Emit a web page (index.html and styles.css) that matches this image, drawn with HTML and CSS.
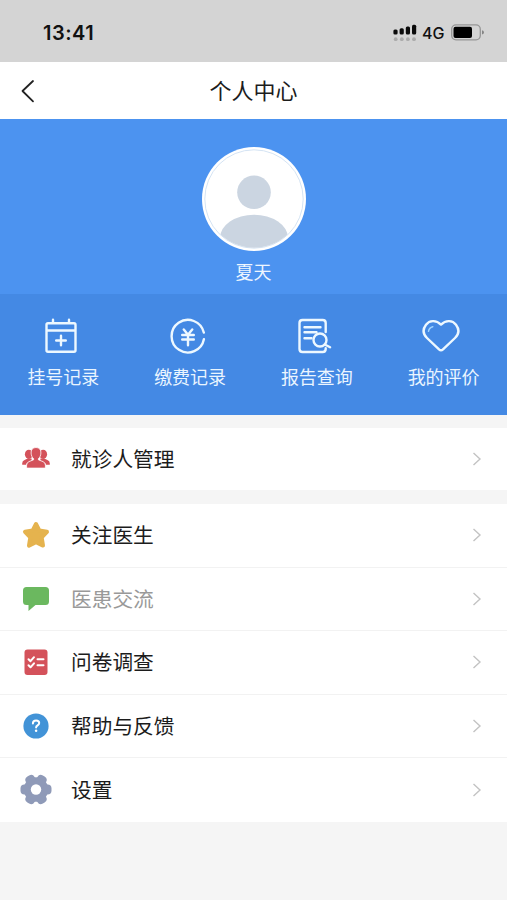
FILE: index.html
```html
<!DOCTYPE html>
<html lang="zh-CN">
<head>
<meta charset="utf-8">
<title>个人中心</title>
<link rel="stylesheet" href="styles.css">
</head>
<body>
<div class="status">
  <span class="time">13:41</span>
  <div class="indicators">
    <svg class="signal" width="24" height="18" viewBox="0 0 24 18">
      <g fill="#0a0a0a"><rect x="-.6" y="5.600" width="4.200" height="5" rx="1.500"/><rect x="5.600" y="4.200" width="4.200" height="6.400" rx="1.500"/><rect x="11.800" y="2.600" width="4.200" height="8" rx="1.500"/><rect x="18" y=".8" width="4.200" height="9.800" rx="1.500"/></g>
      <g fill="#aaa"><circle cx="1.700" cy="15.200" r="1.900"/><circle cx="7.800" cy="15.200" r="1.900"/><circle cx="13.900" cy="15.200" r="1.900"/><circle cx="20" cy="15.200" r="1.900"/></g>
    </svg>
    <span class="network">4G</span>
    <svg class="battery" width="33" height="17" viewBox="0 0 33 17">
      <rect x=".7" y=".9" width="28.600" height="15" rx="4.300" fill="none" stroke="#969696" stroke-width="1.300"/>
      <rect x="2.500" y="2.700" width="18.500" height="11.400" rx="2" fill="#000"/>
      <path d="M31 6.300q2 .6 2 2.100t-2 2.100z" fill="#858585"/>
    </svg>
  </div>
</div>
<header class="nav">
  <svg class="back" width="16" height="24" viewBox="0 0 16 24"><path d="M13 2 2.500 12 13 22.300" fill="none" stroke="#222" stroke-width="1.800" stroke-linecap="round" stroke-linejoin="round"/></svg>
  <h1>个人中心</h1>
</header>
<section class="profile">
  <svg class="avatar" width="104" height="104" viewBox="0 0 104 104">
    <defs><clipPath id="face"><circle cx="52" cy="52" r="48.700"/></clipPath></defs>
    <circle cx="52" cy="52" r="52" fill="#fff"/>
    <circle cx="52" cy="52" r="49.200" fill="none" stroke="#cfe0f2" stroke-width=".9"/>
    <g fill="#cbd5e1" clip-path="url(#face)"><circle cx="52" cy="45.300" r="16.800"/><ellipse cx="52" cy="91" rx="34" ry="23.300"/></g>
  </svg>
  <div class="name">夏天</div>
</section>
<nav class="tabs">
  <a class="tab">
    <svg width="40" height="40" viewBox="0 0 40 40"><path d="M7 6.300h26q1.500 0 1.500 1.500v25.400q0 1.500-1.500 1.500H7q-1.500 0-1.500-1.500V7.800q0-1.500 1.500-1.500zM5.500 13.500h29M12 2.700v3.600M28 2.700v3.600M20 18.700v9.600M15.200 23.500h9.600"/></svg>
    <span>挂号记录</span>
  </a>
  <a class="tab">
    <svg width="40" height="40" viewBox="0 0 40 40"><path d="M35.800 15.600A16.300 16.300 0 1 0 35.900 22.300M15.800 12.500 20 17.700l4.200-5.200M14.200 18h11.600M14.200 22.500h11.600M20 17.700v10.500"/></svg>
    <span>缴费记录</span>
  </a>
  <a class="tab">
    <svg width="40" height="40" viewBox="0 0 40 40"><path d="M31.700 15V6q0-3-3-3H8.500q-3 0-3 3v26q0 3 3 3h20.200q3 0 3-3v-.7M10.500 10.200h16M10.500 15.300h12M10.500 21.200h7"/><circle cx="26" cy="23" r="6.500"/><path d="m30.700 27.500 5.400 2.800"/></svg>
    <span>报告查询</span>
  </a>
  <a class="tab">
    <svg width="40" height="40" viewBox="0 0 40 40"><path d="M20 7.600C15 2.500 8.300 3.300 5 7.700 1.400 12.500 2.200 17.300 6 21l12 11.300q2 1.900 4 0L34 21c3.800-3.700 4.600-8.500 1-13.300C31.700 3.300 25 2.500 20 7.600z"/><path class="shine" d="M7.500 14.300q.6-3.700 4.300-4.600"/></svg>
    <span>我的评价</span>
  </a>
</nav>
<main>
  <section class="group">
    <a class="row single">
      <svg class="icon" width="32" height="32" viewBox="0 0 32 32" fill="#d4525b">
        <ellipse cx="8.800" cy="11.300" rx="3.900" ry="4.600"/><ellipse cx="23.200" cy="11.300" rx="3.900" ry="4.600"/>
        <path d="M2.200 21.800v-1.600q0-2.400 2.400-3.300l3-1.300h4v2l-3.800 1.800q-1.500 1-1.700 2.400zM29.800 21.800v-1.600q0-2.400-2.400-3.300l-3-1.300h-4v2l3.800 1.800q1.500 1 1.700 2.400z"/>
        <path stroke="#fff" stroke-width=".8" d="M16 4.500c-3.500 0-5.100 2.400-4.900 5.500.1 2.600 1.100 4.600 2.500 5.600v1.200l-4.600 1.800q-2.400 1-2.400 3.500v3h18.800v-3q0-2.500-2.400-3.500l-4.600-1.800v-1.200c1.400-1 2.400-3 2.500-5.600.2-3.100-1.400-5.500-4.900-5.500z"/>
      </svg>
      <span class="label">就诊人管理</span>
      <svg class="chevron" width="10" height="16" viewBox="0 0 10 16"><path d="m1.500 2 6.500 6-6.500 6"/></svg>
    </a>
  </section>
  <section class="group">
    <a class="row">
      <svg class="icon" width="32" height="32" viewBox="0 0 32 32"><path d="m16 5 3.300 6.500 7.700 1.300-5.300 5.600 1.300 8.200-7-3.300-7 3.300 1.300-8.200L5 12.800l7.700-1.300z" fill="#e5b34e" stroke="#e5b34e" stroke-width="4" stroke-linejoin="round"/></svg>
      <span class="label">关注医生</span>
      <svg class="chevron" width="10" height="16" viewBox="0 0 10 16"><path d="m1.500 2 6.500 6-6.500 6"/></svg>
    </a>
    <a class="row">
      <svg class="icon" width="32" height="32" viewBox="0 0 32 32"><path d="M6.500 4h19q3.500 0 3.500 3.500v11q0 3.500-3.500 3.500H15.500L8.500 28v-6h-2Q3 22 3 18.500v-11Q3 4 6.500 4z" fill="#6bb85f"/></svg>
      <span class="label muted">医患交流</span>
      <svg class="chevron" width="10" height="16" viewBox="0 0 10 16"><path d="m1.500 2 6.500 6-6.500 6"/></svg>
    </a>
    <a class="row">
      <svg class="icon" width="32" height="32" viewBox="0 0 32 32"><rect x="4.500" y="3.500" width="23" height="25.500" rx="3" fill="#d4525b"/><path d="m8.500 13.200 2 2 3.500-4M8.500 19.300l2 2 3.500-4M17.500 13.300h6M17.500 19.300h6" fill="none" stroke="#fff" stroke-width="2" stroke-linecap="round" stroke-linejoin="round"/></svg>
      <span class="label">问卷调查</span>
      <svg class="chevron" width="10" height="16" viewBox="0 0 10 16"><path d="m1.500 2 6.500 6-6.500 6"/></svg>
    </a>
    <a class="row">
      <svg class="icon" width="32" height="32" viewBox="0 0 32 32"><circle cx="16" cy="16" r="12.600" fill="#4293d7"/><path d="M12.900 13.500q0-3.100 3.200-3.100 3.100 0 3.100 2.700 0 1.300-1.600 2.300-1.500.9-1.500 2.200" fill="none" stroke="#fff" stroke-width="2" stroke-linecap="round"/><circle cx="16.100" cy="20.700" r="1.250" fill="#fff"/></svg>
      <span class="label">帮助与反馈</span>
      <svg class="chevron" width="10" height="16" viewBox="0 0 10 16"><path d="m1.500 2 6.500 6-6.500 6"/></svg>
    </a>
    <a class="row">
      <svg class="icon" width="32" height="32" viewBox="0 0 32 32"><g fill="#8f9ab8"><circle cx="16" cy="15.500" r="12.300"/><rect x=".5" y="10.500" width="31" height="10" rx="4"/><rect x=".5" y="10.500" width="31" height="10" rx="4" transform="rotate(60 16 15.500)"/><rect x=".5" y="10.500" width="31" height="10" rx="4" transform="rotate(-60 16 15.500)"/></g><circle cx="16" cy="15.500" r="5.200" fill="#fff"/></svg>
      <span class="label">设置</span>
      <svg class="chevron" width="10" height="16" viewBox="0 0 10 16"><path d="m1.500 2 6.500 6-6.500 6"/></svg>
    </a>
  </section>
</main>
</body>
</html>
```
FILE: styles.css
```css
* { box-sizing: border-box; }
body {
  margin: 0;
  height: 900px;
  overflow: hidden;
  background: #f5f5f5;
  color: #1c1c1c;
  font-family: "Noto Sans CJK SC", sans-serif;
}
svg { display: block; flex: none; }
.status {
  display: flex;
  justify-content: space-between;
  height: 62px;
  padding: 0 23px 0 43px;
  background: #d4d4d4;
}
.time {
  padding-top: 21px;
  font: 600 20px/24px Inter, sans-serif;
  letter-spacing: .5px;
  color: #111;
}
.indicators {
  display: flex;
  align-items: flex-start;
  padding-top: 24px;
}
.signal { overflow: visible; }
.network {
  width: 28px;
  margin-left: 4px;
  margin-right: 1px;
  margin-top: -1px;
  font: 500 16px/20px Inter, sans-serif;
  color: #111;
}
.nav {
  display: grid;
  grid-template-columns: 20px 1fr 20px;
  align-items: center;
  height: 57px;
  padding: 0 20px;
  background: #fff;
}
h1 {
  margin: 0;
  padding-bottom: 4px;
  font-size: 22px;
  line-height: 32px;
  font-weight: 400;
  text-align: center;
}
.profile {
  display: flex;
  flex-direction: column;
  align-items: center;
  height: 175px;
  padding-top: 28px;
  background: #4c93f0;
  color: #eef6ff;
}
.name {
  margin-top: 7px;
  font-size: 18px;
  line-height: 26px;
}
.tabs {
  display: grid;
  grid-template-columns: repeat(4, 1fr);
  height: 120.500px;
  padding-top: 23px;
  background: #4489e4;
  color: #eaf5ff;
}
.tab {
  display: flex;
  flex-direction: column;
  align-items: center;
}
.tab svg {
  margin-right: 5px;
  fill: none;
  stroke: #edf8ff;
  stroke-width: 2.400;
  stroke-linecap: round;
  stroke-linejoin: round;
}
.tab .shine { stroke: #9fd4ff; stroke-width: 1.500; }
.tab span {
  margin-top: 6px;
  font-size: 18px;
  line-height: 26px;
}
.group {
  margin-top: 13.500px;
  background: #fff;
}
.row {
  display: flex;
  align-items: center;
  height: 63.600px;
  padding: 0 25px 0 20px;
  border-bottom: 1px solid #f2f2f2;
}
.row.single { height: 62px; }
.group + .group { margin-top: 14px; }
.row:last-child { border-bottom: 0; }
.label {
  flex: 1;
  margin-left: 19px;
  padding-bottom: 2px;
  font-size: 20.700px;
  line-height: 30px;
}
.muted { color: #999; }
.chevron {
  fill: none;
  stroke: #c3c3c3;
  stroke-width: 1.400;
}
```
